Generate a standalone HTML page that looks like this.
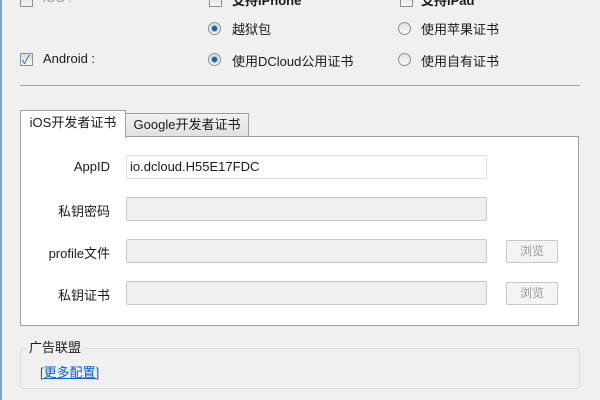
<html><head><style>
body{margin:0;width:600px;height:400px;background:#f0f0f0;font-family:"Liberation Sans","Noto Sans CJK SC",sans-serif;font-size:13px;color:#1a1a1a;position:relative;overflow:hidden}
.a{position:absolute}
.cb{position:absolute;width:11px;height:11px;border:1px solid #8e8f8f;background:linear-gradient(#dcdcdc,#f8f8f8)}
.rd{position:absolute;width:11px;height:11px;border:1px solid #8e8f8f;border-radius:50%;background:linear-gradient(#e0e0e0,#fafafa)}
.rd.on::after{content:"";position:absolute;left:3px;top:3px;width:5px;height:5px;border-radius:50%;background:#1b5ea8;box-shadow:0 0 1px 1px #6fb3ec}
.in{position:absolute;left:126px;width:359px;height:22px;border:1px solid #c8c8c8;border-radius:2px;background:#f0f0f0}
.lb{position:absolute;width:110px;text-align:right;left:0}
.bt{position:absolute;left:506px;width:50px;height:21px;border:1px solid #c8c8c8;border-radius:2px;background:#f4f4f4;color:#999;text-align:center;line-height:21px;font-size:12px}
</style></head><body>
<div class="a" style="left:0;top:0;width:2px;height:400px;background:#7aa7d6"></div>
<div class="cb" style="left:20px;top:-6px"></div><div class="a" style="left:43px;top:-10px;color:#999">iOS :</div>
<div class="cb" style="left:209px;top:-6px"></div><div class="a" style="left:232px;top:-10px;font-weight:bold">支持iPhone</div>
<div class="cb" style="left:400px;top:-6px"></div><div class="a" style="left:421px;top:-10px;font-weight:bold">支持iPad</div>
<div class="rd on" style="left:208px;top:22px"></div><div class="a" style="left:232px;top:19px">越狱包</div>
<div class="rd" style="left:398px;top:22px"></div><div class="a" style="left:421px;top:19px">使用苹果证书</div>
<div class="cb" style="left:20px;top:53px"><span style="position:absolute;left:1px;top:-3px;color:#3a5fa8;font-size:12px">✓</span></div>
<div class="a" style="left:43px;top:51px">Android :</div>
<div class="rd on" style="left:208px;top:53px"></div><div class="a" style="left:232px;top:51px">使用DCloud公用证书</div>
<div class="rd" style="left:398px;top:53px"></div><div class="a" style="left:421px;top:51px">使用自有证书</div>
<div class="a" style="left:20px;top:85px;width:560px;height:1px;background:#a0a0a0"></div>
<div class="a" style="left:125px;top:113px;width:122px;height:23px;border:1px solid #a0a0a0;background:linear-gradient(#f2f2f2,#e0e0e0);line-height:22px;text-align:center">Google开发者证书</div>
<div class="a" style="left:20px;top:136px;width:557px;height:188px;border:1px solid #a0a0a0;background:#fff"></div>
<div class="a" style="left:20px;top:110px;width:104px;height:27px;border:1px solid #a0a0a0;border-bottom:none;background:#fff;line-height:24px;text-align:center">iOS开发者证书</div>
<div class="lb" style="top:159px">AppID</div>
<div class="in" style="top:155px;background:#fff;border-color:#ddd"><span style="position:absolute;left:3px;top:3px">io.dcloud.H55E17FDC</span></div>
<div class="lb" style="top:201px">私钥密码</div><div class="in" style="top:197px"></div>
<div class="lb" style="top:243px">profile文件</div><div class="in" style="top:239px"></div><div class="bt" style="top:240px">浏览</div>
<div class="lb" style="top:285px">私钥证书</div><div class="in" style="top:281px"></div><div class="bt" style="top:282px">浏览</div>
<div class="a" style="left:20px;top:348px;width:558px;height:39px;border:1px solid #dcdcdc;border-radius:3px"></div>
<div class="a" style="left:27px;top:337px;background:#f0f0f0;padding:0 2px">广告联盟</div>
<div class="a" style="left:40px;top:362px;color:#0b5fc8;text-decoration:underline">[更多配置]</div>
</body></html>
